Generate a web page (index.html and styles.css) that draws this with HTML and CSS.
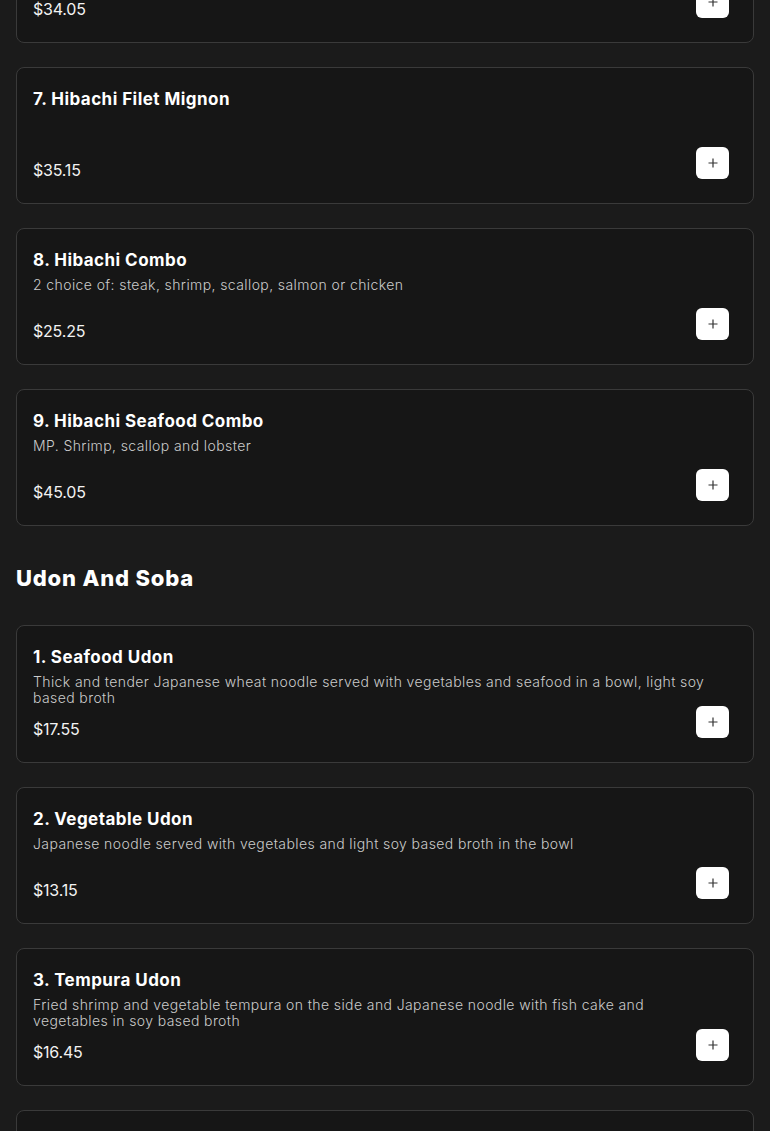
FILE: index.html
```html
<!DOCTYPE html>
<html lang="en">
<head>
<meta charset="utf-8">
<title>Menu</title>
<link rel="stylesheet" href="styles.css">
</head>
<body>
<main class="menu">
  <section class="section first">
    <div class="cards">
      <article class="card">
        <h3 class="item-name">6. Hibachi Lobster</h3>
        <p class="item-desc"></p>
        <div class="item-foot">
          <span class="price">$34.05</span>
          <button class="add" aria-label="Add"><svg viewBox="0 0 12 12" width="12" height="12"><path d="M6 1.5v9M1.5 6h9" /></svg></button>
        </div>
      </article>
      <article class="card">
        <h3 class="item-name">7. Hibachi Filet Mignon</h3>
        <p class="item-desc"></p>
        <div class="item-foot">
          <span class="price">$35.15</span>
          <button class="add" aria-label="Add"><svg viewBox="0 0 12 12" width="12" height="12"><path d="M6 1.5v9M1.5 6h9" /></svg></button>
        </div>
      </article>
      <article class="card">
        <h3 class="item-name">8. Hibachi Combo</h3>
        <p class="item-desc">2 choice of: steak, shrimp, scallop, salmon or chicken</p>
        <div class="item-foot">
          <span class="price">$25.25</span>
          <button class="add" aria-label="Add"><svg viewBox="0 0 12 12" width="12" height="12"><path d="M6 1.5v9M1.5 6h9" /></svg></button>
        </div>
      </article>
      <article class="card">
        <h3 class="item-name">9. Hibachi Seafood Combo</h3>
        <p class="item-desc">MP. Shrimp, scallop and lobster</p>
        <div class="item-foot">
          <span class="price">$45.05</span>
          <button class="add" aria-label="Add"><svg viewBox="0 0 12 12" width="12" height="12"><path d="M6 1.5v9M1.5 6h9" /></svg></button>
        </div>
      </article>
    </div>
  </section>
  <section class="section">
    <h2 class="section-title">Udon And Soba</h2>
    <div class="cards">
      <article class="card">
        <h3 class="item-name">1. Seafood Udon</h3>
        <p class="item-desc">Thick and tender Japanese wheat noodle served with vegetables and seafood in a bowl, light soy based broth</p>
        <div class="item-foot">
          <span class="price">$17.55</span>
          <button class="add" aria-label="Add"><svg viewBox="0 0 12 12" width="12" height="12"><path d="M6 1.5v9M1.5 6h9" /></svg></button>
        </div>
      </article>
      <article class="card">
        <h3 class="item-name">2. Vegetable Udon</h3>
        <p class="item-desc">Japanese noodle served with vegetables and light soy based broth in the bowl</p>
        <div class="item-foot">
          <span class="price">$13.15</span>
          <button class="add" aria-label="Add"><svg viewBox="0 0 12 12" width="12" height="12"><path d="M6 1.5v9M1.5 6h9" /></svg></button>
        </div>
      </article>
      <article class="card">
        <h3 class="item-name">3. Tempura Udon</h3>
        <p class="item-desc">Fried shrimp and vegetable tempura on the side and Japanese noodle with fish cake and vegetables in soy based broth</p>
        <div class="item-foot">
          <span class="price">$16.45</span>
          <button class="add" aria-label="Add"><svg viewBox="0 0 12 12" width="12" height="12"><path d="M6 1.5v9M1.5 6h9" /></svg></button>
        </div>
      </article>
      <article class="card">
        <h3 class="item-name">4. Nabeyaki Udon</h3>
        <p class="item-desc">Japanese noodle with shrimp tempura, chicken, egg and vegetables in soy based broth</p>
        <div class="item-foot">
          <span class="price">$16.45</span>
          <button class="add" aria-label="Add"><svg viewBox="0 0 12 12" width="12" height="12"><path d="M6 1.5v9M1.5 6h9" /></svg></button>
        </div>
      </article>
    </div>
  </section>
</main>
</body>
</html>
```

FILE: styles.css
```css
* { box-sizing: border-box; }
html, body { margin: 0; padding: 0; }
body {
  background: #1b1b1b;
  color: #fff;
  font-family: "Inter", "DejaVu Sans", sans-serif;
  overflow: hidden;
}
.menu {
  padding: 0 16px;
  margin-top: -94px;
}
.section { padding-top: 36px; }
.section.first { padding-top: 0; }
.section-title {
  margin: 0 0 31px;
  font-size: 22px;
  line-height: 32px;
  font-weight: 800;
  letter-spacing: 0.8px;
  color: #fff;
}
.cards {
  display: flex;
  flex-direction: column;
  gap: 24px;
}
.card {
  background: #161616;
  border: 1px solid #3a3a3a;
  border-radius: 8px;
  padding: 16px 24px 21px 16px;
}
.item-name {
  margin: 0;
  font-size: 17px;
  line-height: 30px;
  font-weight: 700;
  letter-spacing: 0.45px;
  color: #fff;
}
.item-desc {
  margin: 2px 0 0;
  min-height: 31px;
  font-size: 14px;
  line-height: 16px;
  font-weight: 300;
  letter-spacing: 0.4px;
  color: #cbcbcb;
  padding-right: 14px;
}
.item-foot {
  display: flex;
  justify-content: space-between;
  align-items: flex-start;
}
.price {
  margin-top: 11px;
  font-size: 16px;
  line-height: 24px;
  font-weight: 400;
  letter-spacing: -0.2px;
  color: #f2f2f2;
}
.add {
  width: 33px;
  height: 32px;
  border: 0;
  border-radius: 6px;
  background: #fff;
  padding: 0;
  display: flex;
  align-items: center;
  justify-content: center;
  cursor: pointer;
}
.add svg path {
  stroke: #333;
  stroke-width: 1.2;
  fill: none;
}
```
